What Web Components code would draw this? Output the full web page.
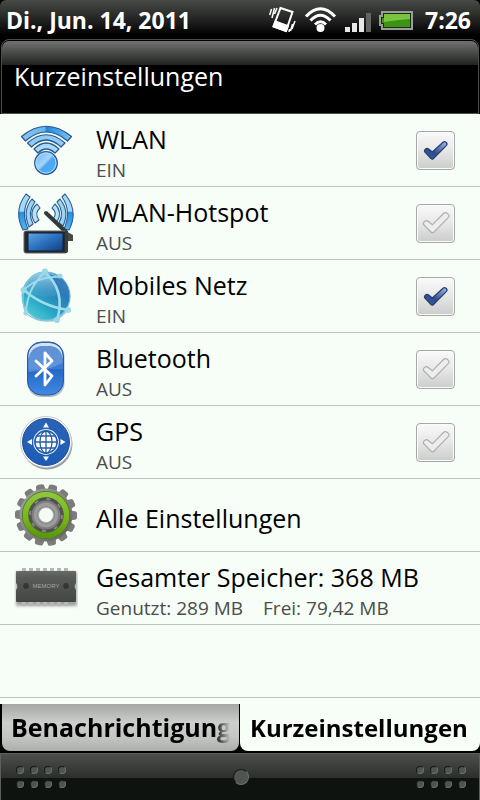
<!DOCTYPE html>
<html lang="de">
<head>
<meta charset="utf-8">
<meta name="viewport" content="width=device-width, initial-scale=1">
<title>Kurzeinstellungen</title>
<style>
  :root {
    --paper: #f7fdf7;
    --line: #bfc3bf;
  }
  body {
    margin: 0;
    background: #000;
    font-family: "Open Sans", "Noto Sans", sans-serif;
  }
</style>
</head>
<body>
<quick-panel>
  <status-bar slot="status" date="Di., Jun. 14, 2011" time="7:26"></status-bar>
  <panel-header slot="header">Kurzeinstellungen</panel-header>

  <setting-row label="WLAN" detail="EIN" toggle checked><quick-icon name="wlan"></quick-icon></setting-row>
  <setting-row label="WLAN-Hotspot" detail="AUS" toggle><quick-icon name="hotspot"></quick-icon></setting-row>
  <setting-row label="Mobiles Netz" detail="EIN" toggle checked><quick-icon name="globe"></quick-icon></setting-row>
  <setting-row label="Bluetooth" detail="AUS" toggle><quick-icon name="bluetooth"></quick-icon></setting-row>
  <setting-row label="GPS" detail="AUS" toggle><quick-icon name="gps"></quick-icon></setting-row>
  <setting-row label="Alle Einstellungen"><quick-icon name="gear"></quick-icon></setting-row>
  <setting-row label="Gesamter Speicher: 368 MB" detail="Genutzt: 289 MB|Frei: 79,42 MB"><quick-icon name="memory"></quick-icon></setting-row>

  <tab-strip slot="tabs">
    <tab-button>Benachrichtigung</tab-button>
    <tab-button active>Kurzeinstellungen</tab-button>
  </tab-strip>
  <drag-handle slot="handle"></drag-handle>
</quick-panel>

<script>
class QuickPanel extends HTMLElement {
  connectedCallback() {
    this.attachShadow({ mode: 'open' });
    this.shadowRoot.innerHTML = `
      <style>
        :host {
          display: flex;
          flex-direction: column;
          min-height: 100vh;
        }

        main {
          flex: 1;
          display: flex;
          flex-direction: column;
          background: var(--paper);
        }

        .spare {
          flex: 1;
          border-bottom: 1px solid var(--line);
          margin-bottom: 6px;
        }
      </style>

      <slot name="status"></slot>
      <slot name="header"></slot>
      <main>
        <slot></slot>
        <div class="spare"></div>
      </main>
      <slot name="tabs"></slot>
      <slot name="handle"></slot>
    `;
  }
}

class StatusBar extends HTMLElement {
  connectedCallback() {
    this.attachShadow({ mode: 'open' });
    this.shadowRoot.innerHTML = `
      <style>
        :host {
          display: flex;
          align-items: center;
          box-sizing: border-box;
          height: 39px;
          padding: 0 9px 0 6px;
          color: #fff;
          font-size: 23px;
          font-weight: 700;
          line-height: 38px;
          white-space: nowrap;
          background: linear-gradient(#484a48, #2a2c2a 40%, #000 90%);
          border-radius: 6px 6px 0 0;
        }

        .date {
          flex: 1;
        }

        svg {
          display: block;
          flex: none;
          margin-right: 12px;
        }
      </style>

      <span class="date">${this.getAttribute('date')}</span>
      <svg width="144" height="38" viewBox="0 0 144 38" aria-hidden="true">
        <!-- vibrate -->
        <g fill="none" stroke="#fff" stroke-width="2">
          <path d="M11.5 7L23.5 11L17 30L4.5 25.5Z"/>
          <path d="M4.5 25.5L6.5 20.5L19 25L17 30Z" fill="#fff"/>
          <path d="M2.5 8L.7 14M5.5 7L3 17M8 7L5.5 13M26 20L23 28M23.5 23L21.5 30M20.5 28L20 31" stroke-width="1.5"/>
        </g>
        <!-- wlan -->
        <g fill="none" stroke="#fff" stroke-width="3">
          <path d="M37 15.5Q51.5 0 66 15.5M41.5 19.5Q51.5 9 61.5 19.5M46 23.5Q51.5 18 57 23.5"/>
          <circle cx="51.5" cy="27" r="2.5" fill="#fff"/>
        </g>
        <!-- signal -->
        <path d="M76 26h5v5h-5zM83 22h5v9h-5zM90 17h5v14h-5z" fill="#e8e8e8"/>
        <path d="M97 12h5v19h-5z" fill="#626462"/>
        <!-- battery -->
        <path d="M113 11H143V28H113V24H111V15H113Z" fill="#1b2b12" stroke="#9a9e98" stroke-width="2"/>
        <path d="M115 13h26v13h-26v-4h-2v-5h2z" fill="#3c9415"/>
        <path d="M115 13h26v5q-14 1-26 3z" fill="#7bc440"/>
      </svg>
      <span>${this.getAttribute('time')}</span>
    `;
  }
}

class PanelHeader extends HTMLElement {
  connectedCallback() {
    this.attachShadow({ mode: 'open' });
    this.shadowRoot.innerHTML = `
      <style>
        :host {
          display: block;
          padding: 0 1px;
          background: #000;
        }

        h1 {
          margin: 0;
          padding: 18px 12px 19px;
          border: 1px solid #4b4c4b;
          border-radius: 8px 8px 0 0;
          background: linear-gradient(#747674, #202220 25px, #000 25px);
          background-clip: padding-box;
          color: #fff;
          font-size: 25px;
          font-weight: 400;
          line-height: 36px;
          box-shadow: inset 0 1px #000;
        }
      </style>

      <h1><slot></slot></h1>
    `;
  }
}

class SettingRow extends HTMLElement {
  connectedCallback() {
    const detail = this.getAttribute('detail');
    const toggle = this.hasAttribute('toggle');
    const tag = toggle ? 'label' : 'div';
    this.attachShadow({ mode: 'open' });
    this.shadowRoot.innerHTML = `
      <style>
        :host {
          display: block;
          border-bottom: 1px solid var(--line);
        }

        .row {
          display: flex;
          align-items: center;
          height: 72px;
          padding: 0 25px 0 14px;
        }

        .icon {
          flex: none;
          width: 64px;
          height: 64px;
        }

        .text {
          flex: 1;
          padding: 6px 0 0 18px;
          color: #000;
          font-size: 25px;
          line-height: 34px;
          white-space: nowrap;
        }

        .detail {
          display: flex;
          gap: 20px;
          color: #4a4d4a;
          font-size: 19px;
          line-height: 29px;
        }

        .check {
          display: grid;
          flex: none;
        }

        .check > * {
          grid-area: 1 / 1;
        }

        input {
          appearance: none;
          box-sizing: border-box;
          width: 39px;
          height: 39px;
          margin: 0;
          border: 1px solid #a6a8a6;
          border-radius: 4px;
          background: linear-gradient(#f8f9f8, #e8e9e8 45%, #cbcdcb);
          box-shadow: inset 0 0 0 1px #fafbfa;
        }

        svg {
          pointer-events: none;
          stroke-width: 1.2;
          stroke-linejoin: round;
        }

        .off {
          fill: #ededed;
          stroke: #aeb0ae;
        }

        .on {
          display: none;
          fill: url(#tick);
          stroke: #263e70;
        }

        input:checked + svg .on {
          display: inline;
        }

        input:checked + svg .off {
          display: none;
        }
      </style>

      <${tag} class="row">
        <span class="icon"><slot></slot></span>
        <div class="text">
          <div>${this.getAttribute('label')}</div>
          ${detail ? `<div class="detail">${detail.split('|').map(part => `<span>${part}</span>`).join('')}</div>` : ''}
        </div>
        ${toggle ? `
          <span class="check">
            <input type="checkbox" ${this.hasAttribute('checked') ? 'checked' : ''}>
            <svg width="39" height="39" viewBox="0 0 39 39" aria-hidden="true">
              <defs>
                <linearGradient id="tick" x1="0" y1="1" x2="1" y2="0">
                  <stop offset="0" stop-color="#3b64a4"/>
                  <stop offset=".4" stop-color="#2d4b8c"/>
                  <stop offset="1" stop-color="#aabfe6"/>
                </linearGradient>
              </defs>
              <path class="on" d="M8.5 20.5Q8 19 9.5 18Q11 16.8 12.3 17.8L16.3 21L27.3 11Q28.5 10 30 11.2Q31.8 12.8 30.5 14.3L17.5 27.5Q16.3 28.8 15 27.5Z"/>
              <path class="off" d="M7.5 20.5Q7 18.5 8.5 17.5Q10.5 16 12 17.3L16.3 20.8L28 9Q29.5 8 31.5 9.5Q34 11.5 32.5 13.3L18 28Q16.5 29.5 15 28Z"/>
            </svg>
          </span>` : ''}
      </${tag}>
    `;
  }
}

// 64x64 drawings, one per setting
const ICONS = {
  wlan: `
    <linearGradient id="b" x1="0" x2="1">
      <stop offset="0" stop-color="#86c4f2"/><stop offset=".46" stop-color="#6cb4ee"/>
      <stop offset=".5" stop-color="#1e87de"/><stop offset="1" stop-color="#7cc4f6"/>
    </linearGradient>
    <linearGradient id="d" x1="0" y1="0" x2="1" y2="1">
      <stop offset="0" stop-color="#64b2f3"/><stop offset=".45" stop-color="#a3d5fb"/>
      <stop offset=".55" stop-color="#4ba4f1"/><stop offset="1" stop-color="#55b5fa"/>
    </linearGradient>
    <g fill="url(#b)" stroke="#26588e" stroke-width="1.2" stroke-linejoin="round">
      <path d="M7.5 18.5Q32 -2 57.5 18.5L53.5 23Q32 5 11.5 23Z"/>
      <path d="M13.5 25Q32 8.5 51 25L47 29Q32 15 17.5 29Z" fill="#8ecbf8"/>
      <path d="M20 31Q32 19 45 31L41 35Q32 27 24 35Z" fill="#a9dafb"/>
      <circle cx="32" cy="45" r="11.3" fill="url(#d)"/>
    </g>
    <circle cx="32" cy="45" r="10" fill="none" stroke="#aedafa"/>`,
  hotspot: `
    <linearGradient id="b" x1="0" y1="0" x2="0" y2="1">
      <stop offset="0" stop-color="#a4d9f8"/><stop offset=".48" stop-color="#a4d9f8"/>
      <stop offset=".5" stop-color="#258ee0"/><stop offset="1" stop-color="#55b4f2"/>
    </linearGradient>
    <linearGradient id="s" x1="0" y1="0" x2="1" y2="1">
      <stop offset="0" stop-color="#62a6e6"/><stop offset=".5" stop-color="#2a70bd"/><stop offset="1" stop-color="#123f7c"/>
    </linearGradient>
    <g fill="url(#b)" stroke="#2d5d90" stroke-width="1.1" stroke-linejoin="round">
      <path d="M12 3Q-1 20 9 39L14 38Q6 20 16 6Z"/>
      <path d="M18 8Q8 20 15 36L19 33Q13 21 21 11Z" fill="#9dd3f6"/>
      <path d="M23 13Q14 21 21 32L25 29Q20 22 26 17Z" fill="#b8e2f9"/>
      <path d="M51 3Q65 20 55 39L50 38Q58 20 48 6Z"/>
      <path d="M46 8Q56 20 49 35L45 32Q51 21 43 11Z" fill="#9dd3f6"/>
      <path d="M41 13Q49 21 43 31L39 28Q44 22 38 17Z" fill="#b8e2f9"/>
    </g>
    <path d="M32 22L52 41" stroke="#343a3b" stroke-width="4" stroke-linecap="round"/>
    <path d="M50 39L59 44V50H50Z" fill="#454948"/>
    <rect x="10" y="40" width="43" height="22" rx="2" fill="#262a2d" stroke="#60646a"/>
    <rect x="14" y="42" width="35" height="18" fill="url(#s)" stroke="#0e2138"/>
    <path d="M51 40H54V60Q54 62 51 62Z" fill="#383c3d"/>`,
  globe: `
    <linearGradient id="g" x1=".2" y1="1" x2=".9" y2=".1">
      <stop offset="0" stop-color="#4fd0da"/><stop offset=".35" stop-color="#27a5c4"/>
      <stop offset=".7" stop-color="#2a7db8"/><stop offset="1" stop-color="#3c7ebc"/>
    </linearGradient>
    <linearGradient id="h" x1="0" y1="0" x2="0" y2="1">
      <stop offset="0" stop-color="#b4dcee" stop-opacity=".9"/><stop offset="1" stop-color="#50a8d0" stop-opacity=".25"/>
    </linearGradient>
    <circle cx="32.5" cy="33" r="24" fill="#7e98a8" opacity=".5"/>
    <circle cx="32" cy="32" r="24" fill="url(#g)" stroke="#78b8d6"/>
    <path d="M10 25Q15 9 31 8Q42 17 44 31Q28 36 10 27Z" fill="url(#h)"/>
    <g fill="none" stroke="#9ddced" stroke-linecap="round">
      <path d="M31 8Q52 27 43 56M10 26Q28 42 54 46" stroke-width="2.6"/>
      <path d="M31 8Q13 24 12 49M10 26Q24 12 46 13" stroke-width="1.8"/>
      <path d="M31 8Q14 9 10 26M10 26Q7 39 12 49M12 49Q24 60 43 56M43 56L54 46M31 8L46 13" stroke-width="1.3" stroke="#83c9df"/>
    </g>
    <g fill="#98d8e9"><circle cx="31" cy="7.5" r="3"/><circle cx="9.5" cy="26" r="3"/><circle cx="12" cy="49" r="2.5"/><circle cx="54" cy="46" r="3"/><circle cx="43" cy="56" r="3"/><circle cx="46" cy="12" r="2.5"/></g>`,
  bluetooth: `
    <linearGradient id="b" x1="0" y1="0" x2="0" y2="1">
      <stop offset="0" stop-color="#3c73c3"/><stop offset=".5" stop-color="#3a7dd6"/>
      <stop offset=".52" stop-color="#2468c6"/><stop offset="1" stop-color="#4089e2"/>
    </linearGradient>
    <rect x="13.5" y="6" width="37" height="54" rx="14" fill="#8a9094" opacity=".6"/>
    <rect x="13.5" y="5" width="36" height="53" rx="14" fill="url(#b)" stroke="#285aa3"/>
    <path d="M14.5 22V19Q15 8 27 6H36Q48 8 48.5 19V22Q47 10 36 9H27Q16 11 14.5 22Z" fill="#d5e3f4"/>
    <path d="M14.5 21Q16 10 27 9H36Q47 10 48.5 21V26Q32 34 14.5 35Z" fill="#8eb3e5" opacity=".45"/>
    <path d="M22 24L38 39L31 48V16L38 24L22 39" fill="none" stroke="#fff" stroke-width="2.8" stroke-linejoin="round" stroke-linecap="round"/>`,
  gps: `
    <linearGradient id="b" x1="0" y1="0" x2="0" y2="1">
      <stop offset="0" stop-color="#2a63b6"/><stop offset="1" stop-color="#1d5cb6"/>
    </linearGradient>
    <circle cx="33" cy="34" r="25.5" fill="#60666c" opacity=".65"/>
    <circle cx="32" cy="32" r="25.5" fill="#fff" stroke="#c2c8d0"/>
    <circle cx="32" cy="32" r="23.5" fill="url(#b)" stroke="#1e509a"/>
    <path d="M32 12.5L35 17.5H29ZM32 51L35 46.5H29ZM13 32L18 29V35ZM51.5 32L46.5 29V35Z" fill="#fff"/>
    <circle cx="32" cy="32" r="11" fill="#fff"/>
    <circle cx="32" cy="32" r="12.3" fill="none" stroke="#dcebfb" stroke-width="1.2"/>
    <g fill="none" stroke="#275da9" stroke-width="1.3">
      <path d="M20.5 32H43.5M32 20.5V43.5M22.5 26H41.5M22.5 38H41.5"/>
      <ellipse cx="32" cy="32" rx="6" ry="11"/>
      <circle cx="32" cy="32" r="11"/>
    </g>`,
  gear: `
    <linearGradient id="m" x1="0" y1="0" x2="1" y2="1">
      <stop offset="0" stop-color="#a2a2a2"/><stop offset=".5" stop-color="#858585"/><stop offset="1" stop-color="#5c5c5c"/>
    </linearGradient>
    <linearGradient id="v" x1="0" y1="0" x2="0" y2="1">
      <stop offset="0" stop-color="#8cc63c"/><stop offset=".6" stop-color="#76b41a"/><stop offset="1" stop-color="#5b980f"/>
    </linearGradient>
    <g fill="#7c7c7c">
      ${Array.from({ length: 14 }, (_, i) => `<path d="M27 8L28 2Q29 1 30 1H34Q35 1 36 2L37 8Z" transform="rotate(${i * 360 / 14 + 14} 32 32)"/>`).join('')}
    </g>
    <circle cx="32" cy="32" r="26.5" fill="url(#m)"/>
    <circle cx="32" cy="32" r="20.5" fill="none" stroke="#4a7a18" stroke-width="7"/>
    <circle cx="32" cy="32" r="20.5" fill="none" stroke="url(#v)" stroke-width="5.6"/>
    <circle cx="32" cy="32" r="17.5" fill="#50524d"/>
    <circle cx="32" cy="32" r="16" fill="none" stroke="#858585" stroke-width="2" stroke-dasharray="4 8.57"/>
    <circle cx="32" cy="32" r="14.5" fill="#7e7e7e"/>
    <circle cx="32" cy="32" r="10.5" fill="none" stroke="#9c9c9c" stroke-width="3.5"/>
    <circle cx="32" cy="32" r="7.5" fill="#f5faf4" stroke="#b5b5b5"/>`,
  memory: `
    <linearGradient id="m" x1="0" y1="0" x2="0" y2="1">
      <stop offset="0" stop-color="#686b68"/><stop offset=".2" stop-color="#585b58"/><stop offset="1" stop-color="#434643"/>
    </linearGradient>
    <filter id="f"><feGaussianBlur stdDeviation="1.5"/></filter>
    <rect x="2" y="16" width="61" height="34" fill="#666" opacity=".6" filter="url(#f)"/>
    <path d="M8 14H57M8 48H57" stroke="#b4b7b4" stroke-width="4" stroke-dasharray="4 3"/>
    <path d="M3 15H61Q62 15 62 16V27Q59 30.5 62 34V45Q62 46 61 46H3Q2 46 2 45V34Q5 30.5 2 27V16Q2 15 3 15Z" fill="url(#m)"/>
    <circle cx="12" cy="30" r="3.5" fill="#343634" stroke="#626562" stroke-width=".6"/>
    <circle cx="52" cy="30" r="3.5" fill="#343634" stroke="#626562" stroke-width=".6"/>
    <text x="32" y="32" text-anchor="middle" font-family="Liberation Sans, sans-serif" font-size="6" fill="#a2a5a2">MEMORY</text>`
};

class QuickIcon extends HTMLElement {
  connectedCallback() {
    this.attachShadow({ mode: 'open' });
    this.shadowRoot.innerHTML = `
      <style>
        :host {
          display: block;
        }

        svg {
          display: block;
          width: 64px;
          height: 64px;
        }
      </style>

      <svg viewBox="0 0 64 64" aria-hidden="true">${ICONS[this.getAttribute('name')]}</svg>
    `;
  }
}

class TabStrip extends HTMLElement {
  connectedCallback() {
    this.attachShadow({ mode: 'open' });
    this.shadowRoot.innerHTML = `
      <style>
        :host {
          display: grid;
          grid-template-columns: 1fr 1fr;
          background: #000;
        }
      </style>

      <slot></slot>
    `;
  }
}

class TabButton extends HTMLElement {
  connectedCallback() {
    this.attachShadow({ mode: 'open' });
    this.shadowRoot.innerHTML = `
      <style>
        :host {
          display: block;
          min-width: 0;
          padding: 0 1px 2px 2px;
        }

        :host([active]) {
          padding: 0 0 2px;
        }

        button {
          display: block;
          width: 100%;
          height: 47px;
          padding: 0 9px;
          border: 0;
          border-radius: 0 0 8px 8px;
          background: linear-gradient(#a2a6a2, #cdcfcd 40%, #c4c6c4 70%, #acaeac);
          color: #000;
          font: inherit;
          font-size: 25px;
          font-weight: 700;
          line-height: 47px;
          text-align: left;
        }

        :host([active]) button {
          padding: 0 10px;
          background: var(--paper);
          font-size: 24px;
        }

        span {
          display: block;
          overflow: hidden;
          white-space: nowrap;
          mask-image: linear-gradient(to left, transparent, #000 16px);
        }

        :host([active]) span {
          mask-image: linear-gradient(to left, transparent, #000 4px);
        }
      </style>

      <button type="button"><span><slot></slot></span></button>
    `;
  }
}

class DragHandle extends HTMLElement {
  connectedCallback() {
    const grip = '<span class="grip">' + '<i></i>'.repeat(8) + '</span>';
    this.attachShadow({ mode: 'open' });
    this.shadowRoot.innerHTML = `
      <style>
        :host {
          display: flex;
          align-items: center;
          justify-content: space-between;
          box-sizing: border-box;
          height: 47px;
          padding: 0 13px 0 15px;
          border: solid #5c5f5c;
          border-width: 1px 1px 0;
          background: linear-gradient(#4c4f4c, #2b2e2b 24px, #0f130f 24px);
        }

        .grip {
          display: grid;
          grid-template-columns: repeat(4, 8px);
          gap: 6px;
        }

        i {
          box-sizing: border-box;
          width: 8px;
          height: 8px;
          border: 1px solid #171a17;
          border-right-color: #6d716d;
          border-bottom-color: #6d716d;
          border-radius: 50%;
          background: #505450;
        }

        .knob {
          width: 16px;
          height: 16px;
        }
      </style>

      ${grip}<i class="knob"></i>${grip}
    `;
  }
}

customElements.define('quick-icon', QuickIcon);
customElements.define('status-bar', StatusBar);
customElements.define('panel-header', PanelHeader);
customElements.define('setting-row', SettingRow);
customElements.define('tab-button', TabButton);
customElements.define('tab-strip', TabStrip);
customElements.define('drag-handle', DragHandle);
customElements.define('quick-panel', QuickPanel);
</script>
</body>
</html>
